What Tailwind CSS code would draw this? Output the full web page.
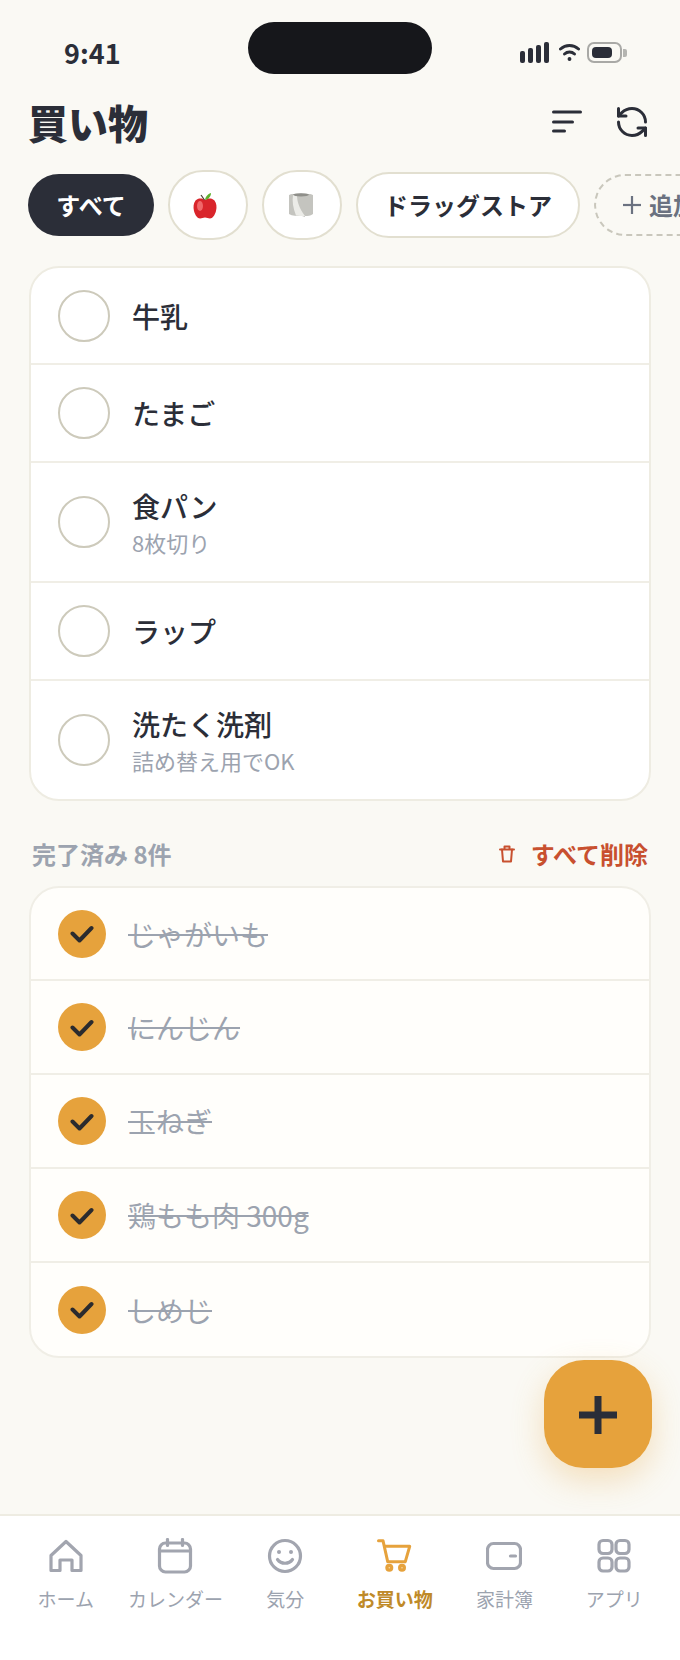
<!DOCTYPE html>
<html lang="ja">
<head>
  <meta charset="UTF-8">
  <meta name="viewport" content="width=device-width, initial-scale=1.0">
  <title>買い物</title>
  <script src="https://cdn.jsdelivr.net/npm/@tailwindcss/browser@4"></script>
</head>
<body class="bg-[#faf9f4] font-['Noto_Sans_CJK_JP','Noto_Sans',sans-serif] text-[#2b2e38]">
  <div class="relative w-[680px] h-[1660px] overflow-hidden flex flex-col">

    <!-- status bar -->
    <div class="relative h-[84px] shrink-0 flex items-start justify-between pl-[64px] pr-[53px] pt-[34px]">
      <span class="text-[27px] leading-[38px] font-bold">9:41</span>
      <div class="absolute left-[248px] top-[22px] w-[184px] h-[52px] rounded-[26px] bg-[#16171b]"></div>
      <div class="flex items-center pt-[8px]">
        <svg width="29" height="21" viewBox="0 0 29 21" fill="#2b2e38"><rect x="0" y="9" width="5" height="12" rx="2"/><rect x="8" y="6" width="5" height="15" rx="2"/><rect x="16" y="3" width="5" height="18" rx="2"/><rect x="24" y="0" width="5" height="21" rx="2"/></svg>
        <svg class="ml-[10px]" width="21" height="19" viewBox="0 0 21 19" fill="none" stroke="#2b2e38" stroke-width="3" stroke-linecap="round"><path d="M1.500 6a13.500 13.500 0 0 1 18 0"/><path d="M5.500 11a7.500 7.500 0 0 1 10 0"/><circle cx="10.500" cy="16" r="1.200" fill="#2b2e38" stroke-width="1.500"/></svg>
        <div class="flex items-center gap-[1px] ml-[7px]">
          <div class="w-[35px] h-[21px] rounded-[7px] border-2 border-[#a9a9a6] p-[3px]">
            <div class="w-[20px] h-full rounded-[4px] bg-[#2b2e38]"></div>
          </div>
          <div class="w-[4px] h-[8px] rounded-r-[2px] bg-[#b5b5b1]"></div>
        </div>
      </div>
    </div>

    <!-- header -->
    <header class="h-[76px] shrink-0 flex items-center justify-between pl-[28px] pr-[30px]">
      <h1 class="text-[40px] leading-[56px] font-black">買い物</h1>
      <div class="flex items-center gap-[32px]">
        <svg width="30" height="24" viewBox="0 0 30 24" fill="none" stroke="#2b2e38" stroke-width="3" stroke-linecap="round"><path d="M1.500 2h27"/><path d="M1.500 12h19"/><path d="M1.500 21h11"/></svg>
        <svg width="36" height="36" viewBox="0 0 24 24" fill="none" stroke="#2b2e38" stroke-width="2" stroke-linecap="round" stroke-linejoin="round"><path d="M21 12a9 9 0 0 0-9-9 9.750 9.750 0 0 0-6.740 2.740L3 8"/><path d="M3 3v5h5"/><path d="M3 12a9 9 0 0 0 9 9 9.750 9.750 0 0 0 6.740-2.740L21 16"/><path d="M16 16h5v5"/></svg>
      </div>
    </header>

    <!-- categories -->
    <div class="h-[70px] mt-[10px] shrink-0 flex items-center gap-[14px] pl-[28px] w-[760px]">
      <div class="w-[126px] h-[62px] rounded-full bg-[#2b2e38] text-white flex items-center justify-center text-[24px] font-bold">すべて</div>
      <div class="w-[80px] h-[70px] rounded-full bg-white border-2 border-[#e2dfd0] flex items-center justify-center">
        <svg class="-ml-[6px]" width="24" height="27" viewBox="0 0 24 27"><path d="M12 8c-2-2-7-2.500-9.500.5C.5 11 0 15 1 19c1 4 3.500 7.500 6 7.500 2 0 3-1 5-1s3 1 5 1c2.500 0 5-3.500 6-7.500 1-4 .5-8-1.500-10.500C19 5.500 14 6 12 8z" fill="#d9252b"/><ellipse cx="7" cy="14" rx="3" ry="5" fill="#f0686a"/><path d="M12 8c0-2 2-6 6-7 0 3-2 6-6 7z" fill="#5eb22e"/><path d="M11.500 8 8 3" stroke="#4a3a30" stroke-width="1.200" fill="none"/></svg>
      </div>
      <div class="w-[80px] h-[70px] rounded-full bg-white border-2 border-[#e2dfd0] flex items-center justify-center">
        <svg class="-ml-[3px]" width="26" height="26" viewBox="0 0 26 26"><path d="M1 3c3-2 21-2 24 0v19c-3 2-5 2-8 2v1l-3-1c-5 0-10 0-13-2z" fill="#c4c4bf"/><path d="M9 3c0 6 2 13 8 21-3 0-7 0-9-.5C5 16 4 9 5 3z" fill="#ecece8"/><ellipse cx="13" cy="2.800" rx="8" ry="1.600" fill="#8f8f8a"/></svg>
      </div>
      <div class="w-[224px] h-[66px] rounded-full bg-white border-2 border-[#e2dfd0] flex items-center justify-center text-[24px] font-bold">ドラッグストア</div>
      <div class="w-[150px] h-[62px] rounded-full border-2 border-dashed border-[#c9c7bc] flex items-center gap-[8px] pl-[27px] text-[24px] font-semibold text-[#6b7280]">
        <svg width="18" height="18" viewBox="0 0 18 18" fill="none" stroke="#6b7280" stroke-width="2.200"><path d="M9 0v18"/><path d="M0 9h18"/></svg>
        <span>追加</span>
      </div>
    </div>

    <!-- to buy -->
    <ul class="mt-[26px] mx-[29px] shrink-0 bg-white border-2 border-[#eeece2] rounded-[30px] divide-y-2 divide-[#f0eee6] overflow-hidden">
      <li class="h-[97px] flex items-center gap-[22px] pl-[27px]">
        <span class="w-[52px] h-[52px] rounded-full border-2 border-[#cdcabb]"></span>
        <span class="text-[28px] leading-[40px] font-medium">牛乳</span>
      </li>
      <li class="h-[98px] flex items-center gap-[22px] pl-[27px]">
        <span class="w-[52px] h-[52px] rounded-full border-2 border-[#cdcabb]"></span>
        <span class="text-[28px] leading-[40px] font-medium">たまご</span>
      </li>
      <li class="h-[120px] flex items-center gap-[22px] pl-[27px]">
        <span class="w-[52px] h-[52px] rounded-full border-2 border-[#cdcabb]"></span>
        <div class="flex flex-col">
          <span class="text-[28px] leading-[40px] font-medium">食パン</span>
          <span class="text-[22px] leading-[32px] text-[#9ca3af]">8枚切り</span>
        </div>
      </li>
      <li class="h-[98px] flex items-center gap-[22px] pl-[27px]">
        <span class="w-[52px] h-[52px] rounded-full border-2 border-[#cdcabb]"></span>
        <span class="text-[28px] leading-[40px] font-medium">ラップ</span>
      </li>
      <li class="h-[118px] flex items-center gap-[22px] pl-[27px]">
        <span class="w-[52px] h-[52px] rounded-full border-2 border-[#cdcabb]"></span>
        <div class="flex flex-col">
          <span class="text-[28px] leading-[40px] font-medium">洗たく洗剤</span>
          <span class="text-[22px] leading-[32px] text-[#9ca3af]">詰め替え用でOK</span>
        </div>
      </li>
    </ul>

    <!-- done header -->
    <div class="mt-[35px] mx-[29px] pl-[3px] pr-[3px] shrink-0 flex items-center justify-between h-[36px]">
      <span class="text-[24px] font-bold text-[#9ca3af]">完了済み 8件</span>
      <div class="flex items-center gap-[16px] text-[24px] font-bold text-[#c8502f]">
        <svg width="16" height="18" viewBox="0 0 16 18" fill="none" stroke="#c8502f" stroke-width="2" stroke-linecap="round" stroke-linejoin="round"><path d="M1 4.500h14"/><path d="M5.500 4V1.500h5V4"/><path d="M3 4.500l1 12h8l1-12"/></svg>
        <span>すべて削除</span>
      </div>
    </div>

    <!-- done -->
    <ul class="mt-[14px] mx-[29px] shrink-0 bg-[#fffefb] border-2 border-[#f0eee6] rounded-[30px] divide-y-2 divide-[#f0eee6] overflow-hidden">
      <li class="h-[93px] flex items-center gap-[22px] pl-[27px]">
        <span class="w-[48px] h-[48px] rounded-full bg-[#e6a23c] flex items-center justify-center"><svg width="24" height="19" viewBox="0 0 24 19" fill="none" stroke="#2b2b2e" stroke-width="4" stroke-linecap="round" stroke-linejoin="round"><path d="M2.500 9.500l7 7L21.500 4"/></svg></span>
        <span class="text-[28px] leading-[40px] text-[#9ca3af] line-through">じゃがいも</span>
      </li>
      <li class="h-[94px] flex items-center gap-[22px] pl-[27px]">
        <span class="w-[48px] h-[48px] rounded-full bg-[#e6a23c] flex items-center justify-center"><svg width="24" height="19" viewBox="0 0 24 19" fill="none" stroke="#2b2b2e" stroke-width="4" stroke-linecap="round" stroke-linejoin="round"><path d="M2.500 9.500l7 7L21.500 4"/></svg></span>
        <span class="text-[28px] leading-[40px] text-[#9ca3af] line-through">にんじん</span>
      </li>
      <li class="h-[94px] flex items-center gap-[22px] pl-[27px]">
        <span class="w-[48px] h-[48px] rounded-full bg-[#e6a23c] flex items-center justify-center"><svg width="24" height="19" viewBox="0 0 24 19" fill="none" stroke="#2b2b2e" stroke-width="4" stroke-linecap="round" stroke-linejoin="round"><path d="M2.500 9.500l7 7L21.500 4"/></svg></span>
        <span class="text-[28px] leading-[40px] text-[#9ca3af] line-through">玉ねぎ</span>
      </li>
      <li class="h-[94px] flex items-center gap-[22px] pl-[27px]">
        <span class="w-[48px] h-[48px] rounded-full bg-[#e6a23c] flex items-center justify-center"><svg width="24" height="19" viewBox="0 0 24 19" fill="none" stroke="#2b2b2e" stroke-width="4" stroke-linecap="round" stroke-linejoin="round"><path d="M2.500 9.500l7 7L21.500 4"/></svg></span>
        <span class="text-[28px] leading-[40px] text-[#9ca3af] line-through">鶏もも肉 300g</span>
      </li>
      <li class="h-[93px] flex items-center gap-[22px] pl-[27px]">
        <span class="w-[48px] h-[48px] rounded-full bg-[#e6a23c] flex items-center justify-center"><svg width="24" height="19" viewBox="0 0 24 19" fill="none" stroke="#2b2b2e" stroke-width="4" stroke-linecap="round" stroke-linejoin="round"><path d="M2.500 9.500l7 7L21.500 4"/></svg></span>
        <span class="text-[28px] leading-[40px] text-[#9ca3af] line-through">しめじ</span>
      </li>
    </ul>

    <!-- fab -->
    <button class="absolute left-[544px] top-[1360px] w-[108px] h-[108px] rounded-[40px] bg-[#e6a23c] shadow-[0_12px_32px_rgba(230,162,60,0.3)] flex items-center justify-center">
      <svg width="38" height="40" viewBox="0 0 38 40" fill="none" stroke="#2b2e38" stroke-width="7"><path d="M19 2v38"/><path d="M0 21h38"/></svg>
    </button>

    <!-- bottom nav -->
    <nav class="mt-auto h-[146px] shrink-0 bg-white border-t-2 border-[#eeece2] grid grid-cols-6 px-[11px] pt-[22px]">
      <a class="flex flex-col items-center gap-[11px] text-[19px] leading-[28px] text-[#9ca3af]">
        <svg width="36" height="36" viewBox="0 0 36 36" fill="none" stroke="#a2a5af" stroke-width="3.200" stroke-linejoin="round"><path d="M3 17.500 18 3.500l15 14V32.500H24V22h-12V32.500H3z"/></svg>
        <span>ホーム</span>
      </a>
      <a class="flex flex-col items-center gap-[11px] text-[19px] leading-[28px] text-[#9ca3af]">
        <svg width="36" height="36" viewBox="0 0 36 36" fill="none" stroke="#a2a5af" stroke-width="3.200" stroke-linecap="round"><rect x="2.500" y="5" width="31" height="29" rx="6"/><path d="M2.500 13h31"/><path d="M10.500 1.500v6"/><path d="M25.500 1.500v6"/></svg>
        <span>カレンダー</span>
      </a>
      <a class="flex flex-col items-center gap-[11px] text-[19px] leading-[28px] text-[#9ca3af]">
        <svg width="36" height="36" viewBox="0 0 36 36" fill="none" stroke="#a2a5af" stroke-width="3.200" stroke-linecap="round"><circle cx="18" cy="18" r="15.500"/><path d="M10.500 21.500c3.500 5 11.500 5 15 0"/><circle cx="12" cy="14" r="2" fill="#a2a5af" stroke="none"/><circle cx="24" cy="14" r="2" fill="#a2a5af" stroke="none"/></svg>
        <span>気分</span>
      </a>
      <a class="flex flex-col items-center gap-[11px] text-[19px] leading-[28px] font-bold text-[#bf8a28]">
        <svg width="36" height="36" viewBox="0 0 36 36" fill="none" stroke="#e6a23c" stroke-width="3" stroke-linecap="round" stroke-linejoin="round"><path d="M1.500 2.700H6l4.700 21h17"/><path d="M8 8.300h24.700l-4.400 15.400"/><circle cx="12.300" cy="29.700" r="4" fill="#e6a23c" stroke="none"/><circle cx="25" cy="29.700" r="4" fill="#e6a23c" stroke="none"/><circle cx="12.300" cy="29.700" r="0.800" fill="#f5d9a8" stroke="none"/><circle cx="25" cy="29.700" r="0.800" fill="#f5d9a8" stroke="none"/></svg>
        <span>お買い物</span>
      </a>
      <a class="flex flex-col items-center gap-[11px] text-[19px] leading-[28px] text-[#9ca3af]">
        <svg width="36" height="36" viewBox="0 0 36 36" fill="none" stroke="#a2a5af" stroke-width="3.200" stroke-linecap="round"><rect x="1.500" y="5.500" width="33" height="25" rx="6"/><path d="M24.500 18h5"/></svg>
        <span>家計簿</span>
      </a>
      <a class="flex flex-col items-center gap-[11px] text-[19px] leading-[28px] text-[#9ca3af]">
        <svg width="36" height="36" viewBox="0 0 36 36" fill="none" stroke="#a2a5af" stroke-width="3.200"><rect x="3" y="2.500" width="13" height="13" rx="4"/><rect x="20" y="2.500" width="13" height="13" rx="4"/><rect x="3" y="20" width="13" height="13" rx="4"/><rect x="20" y="20" width="13" height="13" rx="4"/></svg>
        <span>アプリ</span>
      </a>
    </nav>
  </div>
</body>
</html>
